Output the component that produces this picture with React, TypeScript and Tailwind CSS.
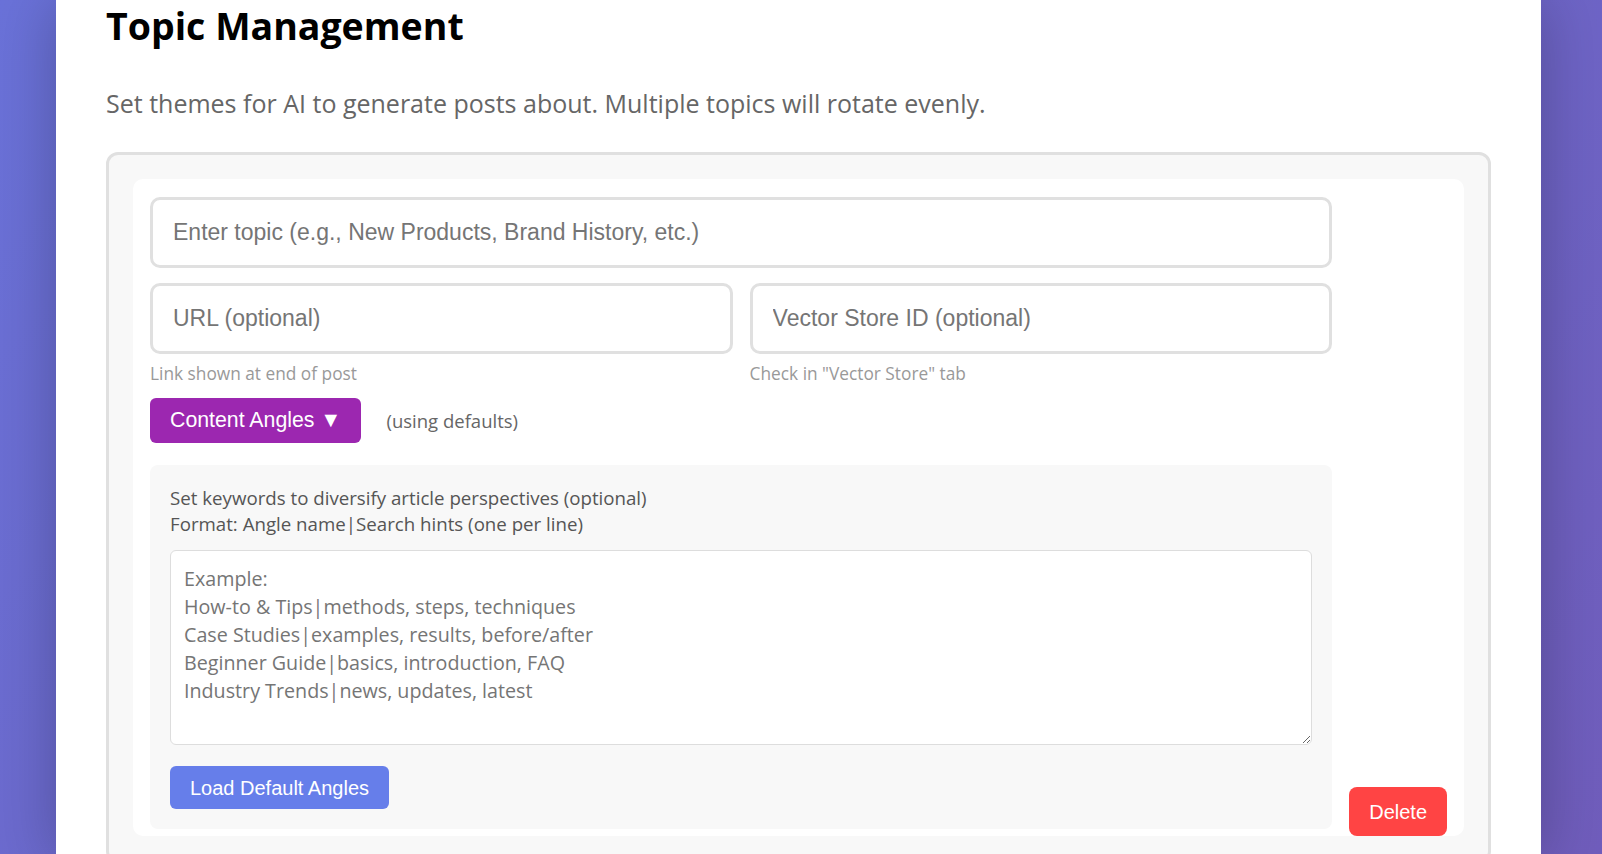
import React from 'react';

const anglesHint = `Example:
How-to & Tips|methods, steps, techniques
Case Studies|examples, results, before/after
Beginner Guide|basics, introduction, FAQ
Industry Trends|news, updates, latest`;

const sans = "font-['Open_Sans',sans-serif]";
const arial = "font-['Liberation_Sans',Arial,sans-serif]";

const App: React.FC = () => {
  return (
    <div className="h-[854px] overflow-hidden bg-[linear-gradient(135deg,#6a72d9,#705dbc)]">
      <div className={`ml-[56px] w-[1485px] min-h-full bg-white px-[50px] pt-[2px] shadow-[0_0_60px_rgba(0,0,0,0.25)] ${sans}`}>
        <h2 className="text-[37.5px] leading-[48px] font-bold text-black">Topic Management</h2>
        <p className="mt-[38px] text-[25px] leading-[30px] text-[#666]">
          Set themes for AI to generate posts about. Multiple topics will rotate evenly.
        </p>

        <div className="mt-[34px] rounded-[12px] border-[3px] border-[#e0e0e0] bg-[#f8f8f8] p-6">
          <div className="flex items-end gap-[17px] rounded-[10px] bg-white p-[17px] pt-[18px] pb-0">
            <div className="flex-1">
              <input
                className={`block h-[71px] w-full rounded-[10px] border-[3px] border-[#e0e0e0] bg-white px-5 text-[23px] outline-none placeholder:text-[#757575] ${arial}`}
                placeholder="Enter topic (e.g., New Products, Brand History, etc.)"
              />
              <div className="mt-[15px] flex gap-[17px]">
                <div className="flex-1">
                  <input
                    className={`block h-[71px] w-full rounded-[10px] border-[3px] border-[#e0e0e0] bg-white px-5 text-[23px] outline-none placeholder:text-[#757575] ${arial}`}
                    placeholder="URL (optional)"
                  />
                  <div className="mt-[10px] text-[17.3px] leading-[20px] text-[#999]">Link shown at end of post</div>
                </div>
                <div className="flex-1">
                  <input
                    className={`block h-[71px] w-full rounded-[10px] border-[3px] border-[#e0e0e0] bg-white px-5 text-[23px] outline-none placeholder:text-[#757575] ${arial}`}
                    placeholder="Vector Store ID (optional)"
                  />
                  <div className="mt-[10px] text-[17.3px] leading-[20px] text-[#999]">Check in "Vector Store" tab</div>
                </div>
              </div>

              <div className="mt-[14px] flex items-center gap-[25px]">
                <button className={`h-[45px] rounded-[6px] bg-[#9c27b0] px-5 text-[21.3px] text-white ${arial}`}>
                  Content Angles ▼
                </button>
                <span className="text-[18.5px] text-[#666]">(using defaults)</span>
              </div>

              <div className="mt-[22px] mb-[7px] rounded-[8px] bg-[#f8f8f8] p-5">
                <div className="text-[18.7px] leading-[26.25px] text-[#555]">
                  Set keywords to diversify article perspectives (optional)
                  <br />
                  Format: Angle name|Search hints (one per line)
                </div>
                <textarea
                  className="mt-[12.5px] block h-[195px] w-full rounded-[6px] border border-[#ddd] bg-white px-[13px] pt-[14px] text-[19.7px] leading-[28px] outline-none placeholder:text-[#757575]"
                  placeholder={anglesHint}
                />
                <button className={`mt-[21px] h-[43px] rounded-[6px] bg-[#667eea] px-5 text-[20px] text-white ${arial}`}>
                  Load Default Angles
                </button>
              </div>
            </div>

            <button className={`h-[49px] rounded-[8px] bg-[#ff4444] px-5 text-[20px] text-white ${arial}`}>
              Delete
            </button>
          </div>
        </div>
      </div>
    </div>
  );
};

export default App;
